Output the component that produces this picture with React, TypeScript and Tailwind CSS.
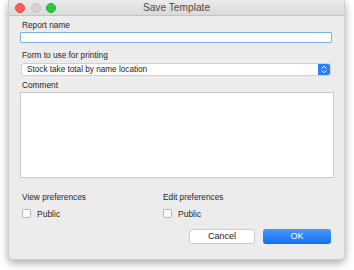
import React from "react";

const FONT = { fontFamily: '"Liberation Sans", Arial, sans-serif' };

function Checkbox({ label }: { label: string }) {
  return (
    <div className="flex items-center h-[9px]">
      <span className="w-[9px] h-[9px] rounded-[2px] border border-[#b5b5b5] bg-white" />
      <span className="ml-[6px] text-[8.5px] leading-[10px] text-[#262626]">{label}</span>
    </div>
  );
}

export default function App() {
  return (
    <div className="w-[354px] h-[270px] bg-white overflow-hidden" style={FONT}>
      <div className="ml-[8px] w-[337px] h-[260px] bg-[#ececec] rounded-b-[5px] border-x border-b border-[#cfcfcf] shadow-[0_3px_9px_rgba(0,0,0,0.35)] flex flex-col">
        {/* title bar */}
        <div className="relative h-[16px] shrink-0 bg-gradient-to-b from-[#ebebeb] to-[#dadada] border-b border-[#c4c4c4] flex items-center justify-center">
          <div className="absolute left-[6px] top-[3px] flex gap-[5.5px]">
            <span className="w-[10px] h-[10px] rounded-full bg-[#fc5f57] border border-[#e0443e]" />
            <span className="w-[10px] h-[10px] rounded-full bg-[#d4d4d4] border border-[#c4c4c4]" />
            <span className="w-[10px] h-[10px] rounded-full bg-[#2ac940] border border-[#1aab29]" />
          </div>
          <span className="text-[10.2px] leading-[12px] text-[#4a4a4a]">Save Template</span>
        </div>

        <div className="flex flex-col pl-[11px] text-[#262626]">
          <div className="mt-[4px] ml-[2px] h-[10px] text-[8.3px] leading-[10px]">Report name</div>
          <div className="mt-[2px] w-[312px] h-[11px] bg-white border-[1.5px] border-[#7db0ea] rounded-[1px]" />

          <div className="mt-[7px] ml-[2px] h-[10px] text-[8.3px] leading-[10px]">Form to use for printing</div>
          <div className="mt-[3px] ml-[1px] w-[310px] h-[13px] bg-white rounded-[3px] border border-[#d0d0d0] flex items-center overflow-hidden">
            <span className="flex-1 pl-[5px] text-[8.2px] leading-[10px] text-[#1a1a1a]">Stock take total by name location</span>
            <span className="w-[12px] h-full bg-[#2f7ef5] flex items-center justify-center">
              <svg width="6" height="9" viewBox="0 0 6 9" fill="none" stroke="white" strokeWidth="1" strokeLinecap="round" strokeLinejoin="round">
                <path d="M1 3.2 L3 1.2 L5 3.2" />
                <path d="M1 5.8 L3 7.8 L5 5.8" />
              </svg>
            </span>
          </div>

          <div className="mt-[4px] ml-[2px] h-[10px] text-[8.3px] leading-[10px]">Comment</div>
          <div className="mt-[2px] w-[314px] h-[86px] bg-white border border-[#c9c9c9]" />

          <div className="mt-[14px] ml-[2px] grid grid-cols-[141px_141px]">
            <div className="h-[10px] text-[8.3px] leading-[10px]">View preferences</div>
            <div className="h-[10px] text-[8.3px] leading-[10px]">Edit preferences</div>
          </div>
          <div className="mt-[7px] ml-[2px] grid grid-cols-[141px_141px]">
            <Checkbox label="Public" />
            <Checkbox label="Public" />
          </div>

          <div className="mt-[11px] w-[311px] flex justify-end gap-[8px]">
            <button className="w-[66px] h-[15px] bg-white rounded-[3px] border border-[#cdcdcd] text-[9px] leading-[13px] text-[#1a1a1a]">
              Cancel
            </button>
            <button className="w-[68px] h-[15px] rounded-[3px] bg-gradient-to-b from-[#4a98f9] to-[#0c6ff1] text-[9px] leading-[13px] text-white">
              OK
            </button>
          </div>
        </div>
      </div>
    </div>
  );
}
